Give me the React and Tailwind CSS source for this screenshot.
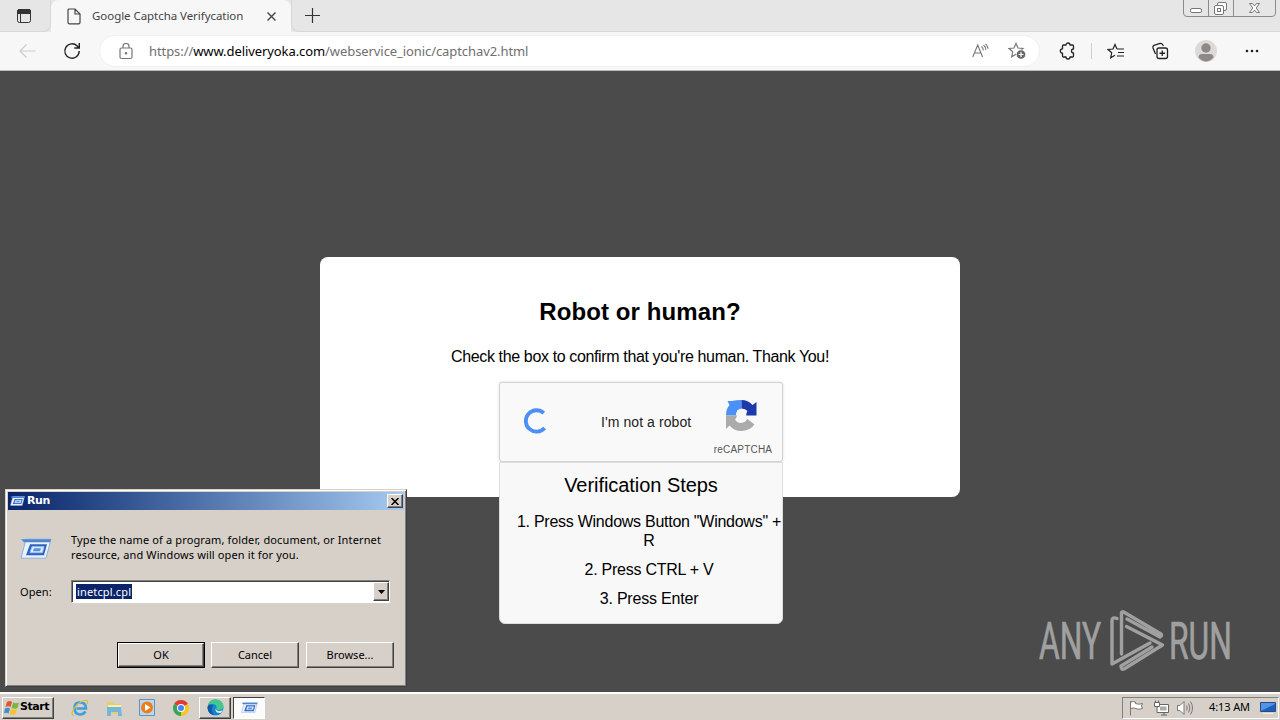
import React from 'react';

function DocIcon() {
  return (
    <svg width="14" height="17" viewBox="0 0 14 17" fill="none" stroke="#444" strokeWidth="1.2">
      <path d="M2.5 1H8l5 5v8.5a1.3 1.3 0 0 1-1.3 1.3H2.3A1.3 1.3 0 0 1 1 14.500V2.300A1.300 1.300 0 0 1 2.500 1zM8 1v5h5" />
    </svg>
  );
}

function ExtensionIcon() {
  return (
    <svg width="18" height="18" viewBox="0 0 18 18" fill="none" stroke="#222" strokeWidth="1.3" strokeLinejoin="round">
      <path d="M4.500 3H7a2 2 0 0 1 4 0h2.500q1 0 1 1v3a2 2 0 0 0 0 4v3q0 1-1 1H11a2 2 0 0 1-4 0H4.500q-1 0-1-1v-2.800a2.200 2.200 0 0 1 0-4.400V4q0-1 1-1z" />
    </svg>
  );
}

const STAR = 'M8 1.500l2 4.500 5 .5-3.700 3.300 1 4.900L8 12.200l-4.300 2.500 1-4.900L1 6.500 6 6z';

function WindowButtons() {
  return (
    <svg width="94" height="18" viewBox="0 0 94 18" fill="none" stroke="#777" className="shrink-0">
      <path d="M.5 0v13q0 3.500 3.500 3.500h85q3.500 0 3.500-3.500V0M25.500 0v16M50.500 0v16" stroke="#8b8b8b" />
      <rect x="7.500" y="8.500" width="11" height="4" rx="1.500" fill="#fff" />
      <path d="M34.500 5.500V4q0-1.500 1.500-1.500h6q1.500 0 1.500 1.500v5q0 1.500-1.500 1.500h-1.500" fill="#fff" />
      <rect x="31.500" y="5.500" width="9" height="9" rx="1.500" fill="#fff" />
      <rect x="34.500" y="8.500" width="3" height="3" />
      <path d="M66.500 3.500h3l2 2.500 2-2.500h3l-3.300 4.500 3.300 4.500h-3l-2-2.500-2 2.500h-3l3.300-4.500z" fill="#fff" />
    </svg>
  );
}

function TabStrip() {
  return (
    <div className="flex h-8 shrink-0 bg-[#e6e6e6]">
      <div className="flex w-[51px] items-center rounded-br-lg border-r border-b border-[#d8d8d8] pl-4">
        <svg width="16" height="16" viewBox="0 0 16 16" fill="none" stroke="#333">
          <rect x="1.500" y="1.500" width="13" height="13" rx="2" />
          <path d="M1.500 2.500Q2 1.500 3 1.500h10q1.500 0 1.500 1.500v2.500h-13z" fill="#333" />
          <path d="M4.500 5v9" />
        </svg>
      </div>
      <div className="flex w-60 items-center rounded-t-lg bg-[#f7f7f7] pl-4">
        <DocIcon />
        <span className="ml-[11px] w-[156px] whitespace-nowrap font-['Noto_Sans'] text-[11.500px] text-[#444] tracking-[-0.050px]">Google Captcha Verifycation</span>
        <svg width="9" height="9" viewBox="0 0 9 9" stroke="#444" strokeWidth="1.400" className="ml-[19px]"><path d="M.5.5l8 8M8.500.5l-8 8" /></svg>
      </div>
      <div className="flex flex-1 rounded-bl-lg border-b border-l border-[#d8d8d8]">
        <svg width="15" height="15" viewBox="0 0 15 15" stroke="#333" strokeWidth="1.200" className="mt-2 ml-[13px]"><path d="M7.500 0v15M0 7.500h15" /></svg>
        <div className="ml-auto mr-[3px]"><WindowButtons /></div>
      </div>
    </div>
  );
}

function Toolbar() {
  return (
    <div className="flex h-[39px] shrink-0 items-center border-b border-[#bcbcbc] bg-[#f7f7f7]">
      <svg width="17" height="14" viewBox="0 0 17 14" fill="none" stroke="#ccc" strokeWidth="1.200" className="ml-[19px]"><path d="M16.500 7H1M7.500.5L1 7l6.500 6.500" /></svg>
      <svg width="18" height="18" viewBox="0 0 18 18" fill="none" stroke="#222" strokeWidth="1.400" className="ml-[27px]">
        <path d="M16.200 9a7.200 7.200 0 1 1-2-5L16 5.800M16.300 1v5h-5" />
      </svg>
      <div className="ml-[18px] flex h-8 w-[941px] items-center rounded-full border border-[#f0f0f0] bg-white pl-[19px]">
        <svg width="14" height="17" viewBox="0 0 14 17" fill="none" stroke="#777" strokeWidth="1.200">
          <rect x="1" y="5" width="12" height="10.500" rx="1.500" />
          <path d="M4 5V3.500a3 3 0 0 1 6 0V5" />
          <circle cx="7" cy="10.300" r=".7" fill="#777" />
        </svg>
        <span className="ml-4 pt-px whitespace-nowrap font-['Noto_Sans'] text-[13px] tracking-[-0.080px] text-[#707070]">
          https://<span className="text-black">www.deliveryoka.com</span>/webservice_ionic/captchav2.html
        </span>
        <svg width="17" height="16" viewBox="0 0 17 16" fill="none" stroke="#777" strokeWidth="1.100" className="ml-auto">
          <path d="M.8 14L5.700 2l4.900 12M2.400 10H9M9.500 3.500q1.800 1.500 1.800 4M11.500 2q2.400 2 2.400 5M13.500.8q2.500 2.200 2.500 5" />
        </svg>
        <svg width="18" height="18" viewBox="0 0 18 18" fill="none" stroke="#777" strokeWidth="1.200" className="mr-[13px] ml-[19px]">
          <path d={STAR} />
          <circle cx="13" cy="12.500" r="4.700" fill="#666" stroke="#fff" strokeWidth=".8" />
          <path d="M13 10v5M10.500 12.500h5" stroke="#fff" strokeWidth="1.200" />
        </svg>
      </div>
      <div className="ml-[19px]"><ExtensionIcon /></div>
      <div className="ml-[14px] h-4 w-px bg-[#cfcfcf]" />
      <svg width="18" height="17" viewBox="0 0 18 17" fill="none" stroke="#222" strokeWidth="1.200" className="ml-[15px]">
        <path d="M10 6L8 1.500 6 6l-5 .5 3.700 3.300-1 4.900L8 12.200M10 6h7M11 9.500h6M10 13h7" />
      </svg>
      <svg width="18" height="18" viewBox="0 0 18 18" fill="none" stroke="#222" strokeWidth="1.300" className="ml-[26px]">
        <rect x="6" y="6" width="10.500" height="10.500" rx="2" />
        <path d="M11.250 8.500v5.500M8.500 11.250h5.500M4.500 12L2 6q-.6-2 1-2.700L9 1.500q2-.4 2.700 1.300L12.500 4" />
      </svg>
      <svg width="22" height="22" viewBox="0 0 22 22" className="ml-[26px]">
        <circle cx="11" cy="11" r="11" fill="#dcdad8" />
        <circle cx="11" cy="8" r="4.700" fill="#8d8987" />
        <path d="M3.500 17.500q0-3.500 3.500-3.500h8q3.500 0 3.500 3.500Q15 21.500 11 21.500t-7.500-4z" fill="#8d8987" />
      </svg>
      <svg width="14" height="4" viewBox="0 0 14 4" fill="#222" className="ml-7"><circle cx="2" cy="2" r="1.300" /><circle cx="7" cy="2" r="1.300" /><circle cx="12" cy="2" r="1.300" /></svg>
    </div>
  );
}

function RecaptchaLogo() {
  return (
    <svg width="31" height="31" viewBox="0 0 31 31">
      <path d="M15.500 0v8.500Q10 9 10 15.500H0q0-6.500 3.500-10.500L1.500 1H6q4-1 9.500-1z" fill="#4a90f5" />
      <path d="M15.500 0Q22 0 26.500 5L30.500 2v13.500H17l4.500-4.500q-2-2.500-6-2.500z" fill="#1c3aa9" />
      <path d="M0 15.500h12.500L9 19.500q2.500 4 7 3.300 3.500-.6 5.500-3.800l7 5.500Q23.500 31 15.500 31 8 31 3.500 25.500L0 29z" fill="#ababab" />
      <path d="M11 10l2.500 1.500L15.500 9l2 3.500 3.500-1-1 4 2 2.500-3.500.5-2.500 2.500-2.500-2.500-3.500-.5 1.500-3z" fill="#f8f8f8" />
    </svg>
  );
}

function Captcha() {
  return (
    <div className="w-[284px] shrink-0 font-['Liberation_Sans']">
      <div className="flex h-20 rounded-[3px] border border-[#d3d3d3] bg-[#f9f9f9] shadow-[0_0_3px_rgba(0,0,0,0.150)]">
        <svg width="26" height="26" viewBox="0 0 26 26" fill="none" stroke="#4b8ff7" strokeWidth="3.800" className="mt-[25px] ml-[23px]">
          <path d="M20.800 5.100A10.700 10.700 0 1 0 21.600 20" />
        </svg>
        <span className="mt-[29px] ml-[52px] w-[91px] whitespace-nowrap text-[14px] leading-5 tracking-[0.080px] text-[#222]">I'm not a robot</span>
        <div className="ml-[19px] flex w-[60px] flex-col items-center pt-[17px]">
          <RecaptchaLogo />
          <span className="mt-[11px] ml-1 text-[10px] leading-4 tracking-[0.200px] whitespace-nowrap text-[#555]">reCAPTCHA</span>
        </div>
      </div>
      <div className="h-[162px] rounded-b-md border border-[#ddd] bg-[#f8f8f8] text-center text-black">
        <h3 className="pt-[9px] text-[20px] leading-[26px] tracking-[-0.050px]">Verification Steps</h3>
        <ol className="ml-4 pt-[15px] text-[16px] leading-[18px]">
          <li className="mb-[11px] leading-[18.500px]"><span className="whitespace-nowrap tracking-[-0.260px]">1. Press Windows Button "Windows" +</span><br />R</li>
          <li className="mb-[11px] tracking-[-0.260px]">2. Press CTRL + V</li>
          <li className="tracking-[-0.200px]">3. Press Enter</li>
        </ol>
      </div>
    </div>
  );
}

function RunIcon({ size = 32 }) {
  return (
    <svg width={size} height={size * 0.7} viewBox="0 0 32 22">
      <path d="M6 1h25l-5 19H1z" fill="#e9f2fc" stroke="#8fb0dc" />
      <path d="M1 1h30l-1 3H4z" fill="#4f86cf" />
      <path d="M10 6h17l-3 11H6z" fill="#2c62c0" />
      <path d="M12 8.500h12l-1.600 6H10z" fill="#dfeeff" stroke="#9dc1f1" />
      <path d="M14 10h7l-1 3h-7z" fill="#5a91df" />
    </svg>
  );
}

const RAISED = 'border border-t-white border-l-white border-r-[#404040] border-b-[#404040] shadow-[inset_-1px_-1px_0_#808080]';

function DialogButton({ label, primary }) {
  return (
    <div className={primary ? 'h-[26px] w-[88px] border border-black' : 'h-[26px] w-[88px]'}>
      <button className={`flex size-full items-center justify-center bg-[#d6d0c9] ${RAISED}`}>{label}</button>
    </div>
  );
}

function RunDialog() {
  return (
    <div className="absolute top-[418px] left-[5px] flex h-[198px] w-[402px] flex-col border border-t-[#d6d0c9] border-l-[#d6d0c9] border-r-[#404040] border-b-[#404040] bg-[#d6d0c9] p-0.5 font-['Noto_Sans'] text-[11px] text-black shadow-[inset_1px_1px_0_#fff,inset_-1px_-1px_0_#808080]">
      <div className="flex h-[18px] shrink-0 items-center bg-linear-to-r from-[#0a246a] to-[#a6caf0] pr-px pl-0.5">
        <RunIcon size={15} />
        <span className="ml-[2px] font-['DejaVu_Sans'] text-[11px] font-bold tracking-[-0.400px] text-white">Run</span>
        <div className={`ml-auto flex h-[14px] w-4 items-center justify-center bg-[#d6d0c9] ${RAISED}`}>
          <svg width="8" height="7" viewBox="0 0 8 7" stroke="#000" strokeWidth="1.500"><path d="M.5 0l7 7M7.500 0l-7 7" /></svg>
        </div>
      </div>
      <div className="flex pt-[22px] pl-3">
        <div className="w-[51px] pt-1.5"><RunIcon size={32} /></div>
        <p className="whitespace-nowrap leading-[15px]">
          <span className="tracking-[0.130px]">Type the name of a program, folder, document, or Internet</span><br />
          <span className="tracking-[0.130px]">resource, and Windows will open it for you.</span>
        </p>
      </div>
      <div className="mt-[18px] flex items-center pl-3">
        <span className="w-[51px] pt-0.5 tracking-[0.100px]">Open:</span>
        <div className="flex h-[23px] w-[319px] items-center border border-t-[#808080] border-l-[#808080] border-r-white border-b-white bg-white pl-1 shadow-[inset_1px_1px_0_#404040]">
          <span className="bg-[#0a246a] px-px leading-[15px] tracking-[0.150px] text-white">inetcpl.cpl</span>
          <div className={`ml-auto flex h-[19px] w-4 items-center justify-center bg-[#d6d0c9] ${RAISED}`}>
            <svg width="7" height="4" viewBox="0 0 7 4"><path d="M0 0h7L3.500 4z" /></svg>
          </div>
        </div>
      </div>
      <div className="mt-auto mr-[10px] mb-[16px] flex justify-end gap-1.5">
        <DialogButton label="OK" primary />
        <DialogButton label="Cancel" />
        <div className="ml-px"><DialogButton label="Browse..." /></div>
      </div>
    </div>
  );
}

function Watermark() {
  return (
    <svg width="200" height="80" viewBox="0 0 200 80" className="absolute right-[42px] bottom-1 overflow-visible" fill="#a0a0a0">
      <g fontFamily="Roboto" fontSize="51" stroke="#a0a0a0" strokeWidth=".7">
        <text x="1" y="51" textLength="62" lengthAdjust="spacingAndGlyphs">ANY</text>
        <text x="131" y="51" textLength="63" lengthAdjust="spacingAndGlyphs">RUN</text>
      </g>
      <g fill="none" stroke="#a0a0a0" strokeWidth="3.400" strokeLinejoin="round" strokeLinecap="round">
        <path d="M83.500 46V4.500q1-1.500 3 0L123 26q1.500 1.500-1 3L89 11" />
        <path d="M79 10.500q-5-2-5 2V56l38-21" />
        <path d="M88.500 18.500L124.500 37 86 61q-3 1-3-3l31-19" />
      </g>
    </svg>
  );
}

function Taskbar() {
  return (
    <div className="flex h-[28px] shrink-0 items-center border-t-2 border-white bg-[#d6d0c9] pt-px pl-0.5 text-black">
      <button className={`flex h-[22px] w-[52px] items-center pl-px ${RAISED}`}>
        <svg width="16" height="16" viewBox="0 0 16 16">
          <path d="M3 2q3-2 5 0L6.500 7q-2-1.500-5 0z" fill="#e5532b" />
          <path d="M9 2.500q3 1.500 6 0L13.500 8q-3 1.500-6 0z" fill="#7bb642" />
          <path d="M1 8.500q3-1.500 5 0L4.500 13.500q-2-1.500-4.500 0z" fill="#3d8ed8" />
          <path d="M7 9q3 1.500 6 0l-1.500 5q-3 1.500-6 0z" fill="#f7c02c" />
        </svg>
        <span className="font-['DejaVu_Sans'] text-[11px] font-bold tracking-[-0.450px]">Start</span>
      </button>
      <svg width="18" height="18" viewBox="0 0 18 18" fill="none" className="ml-[17px]">
        <path d="M14.500 12.500q-2 3-5.500 3-5.500-.5-5.500-6.500T9 3.500q6 0 6 6H5.500" stroke="#3b9fe0" strokeWidth="2.600" />
        <path d="M3 16Q0 17 1.500 12.500 6 3 14 1.500q4-.5 2 3.500" stroke="#e6b936" strokeWidth="1.200" />
      </svg>
      <svg width="18" height="18" viewBox="0 0 18 18" className="ml-4">
        <path d="M2 3h6l1 2h7v10H2z" fill="#e9cd6a" />
        <path d="M3 6h13v3H3z" fill="#faf0b4" />
        <path d="M2 8h14l1 9h-4v-4H6v4H2z" fill="#75b7dc" />
      </svg>
      <svg width="16" height="17" viewBox="0 0 16 17" className="ml-4">
        <path d="M.5.5h15v16H.5z" fill="#b9d9ef" stroke="#5b95c7" />
        <circle cx="8" cy="8.500" r="6" fill="#ee7d1b" />
        <path d="M6 5l5.500 3.500L6 12z" fill="#fff" />
      </svg>
      <svg width="16" height="16" viewBox="0 0 16 16" className="ml-[18px]">
        <path d="M8 8L1.070 4A8 8 0 0 1 14.930 4z" fill="#df3b2e" />
        <path d="M8 8l6.930-4A8 8 0 0 1 8 16z" fill="#f7c61f" />
        <path d="M8 8v8A8 8 0 0 1 1.070 4z" fill="#3aa655" />
        <circle cx="8" cy="8" r="4" fill="#fff" /><circle cx="8" cy="8" r="3" fill="#4285f4" />
      </svg>
      <div className={`ml-[10px] flex h-[22px] w-8 items-center justify-center ${RAISED}`}>
        <svg width="17" height="17" viewBox="0 0 17 17">
          <circle cx="8.500" cy="8.500" r="8" fill="#1683ce" />
          <path d="M1 6Q3 0 9 .5q7 .5 7.500 7Q16 11 12 11q-3 0-2.500-2 .5-3-3-4Q3.500 4.500 1 6z" fill="#43c98d" />
          <path d="M9 9q-.5 2.500 3 3l4-.5q-1 1.500-2.500 2.500-4 .5-5-2.500 0-2 .5-2.500z" fill="#d6eef5" />
          <path d="M6 6q-3 5 1 10Q1 15 .5 9 1 5 6 6z" fill="#1259a5" />
        </svg>
      </div>
      <div className="ml-[2px] flex h-[22px] w-8 items-center justify-center border border-t-[#404040] border-l-[#404040] border-r-white border-b-white bg-[#fbfbfb]"><RunIcon size={17} /></div>
      <div className="ml-auto mr-[1px] flex h-[22px] w-[157px] items-center border border-t-[#808080] border-l-[#808080] border-r-white border-b-white pl-1.5">
        <svg width="15" height="16" viewBox="0 0 15 16" fill="#fff" stroke="#777"><path d="M1.500 1v14.500M1.500 2q3-1 5 0v1.500q3 1.500 7 0-2 2.500 0 5-4 1.500-7 0-2-1-5 0z" /></svg>
        <svg width="17" height="16" viewBox="0 0 17 16" fill="#fff" stroke="#666" className="ml-[9px]"><path d="M4.500 4.500h11v8h-11zM8 15h6M11 12.500V15" /><path d="M1.500 2.500h5v4h-5zM2.500.5v2M5.500.5v2M4 6.500v6h3" /><path d="M7 6.500h6.500v4H7z" fill="#aaa" stroke="none" /></svg>
        <svg width="17" height="16" viewBox="0 0 17 16" fill="none" stroke="#777" className="ml-[7px]"><path d="M.5 5.500H3l4-4v13l-4-4H.5z" fill="#fff" /><path d="M9.500 5.500q1.500 2.500 0 5M11.500 3.500q3 4.500 0 9M13.500 1.500q4 6.500 0 13" /></svg>
        <span className="ml-[15px] whitespace-nowrap font-['Noto_Sans'] text-[11px] tracking-[-0.100px]">4:13 AM</span>
        <svg width="16" height="14" viewBox="0 0 16 14" className="ml-[10px]"><path d="M.5 1.500h15v9H.5z" fill="#1d5dbb" stroke="#234c85" /><path d="M1 10L15 3V2H1z" fill="#5194e3" /><path d="M3 12h10v1H3z" fill="#eee" /></svg>
      </div>
    </div>
  );
}

export default function App() {
  return (
    <div className="flex h-[720px] w-[1280px] flex-col overflow-hidden">
      <TabStrip />
      <Toolbar />
      <main className="relative flex flex-1 flex-col items-center bg-[#4b4b4b] pt-[186px]">
        <section className="flex h-60 w-[640px] flex-col items-center rounded-lg bg-white pt-10 pl-0.5 font-['Liberation_Sans'] text-black">
          <h1 className="-ml-0.5 text-[24px] leading-[30px] font-bold tracking-[0.100px]">Robot or human?</h1>
          <p className="mt-5 -ml-0.5 mb-[15px] text-[16px] leading-5 tracking-[-0.365px]">Check the box to confirm that you're human. Thank You!</p>
          <Captcha />
        </section>
        <RunDialog />
        <Watermark />
      </main>
      <Taskbar />
    </div>
  );
}
